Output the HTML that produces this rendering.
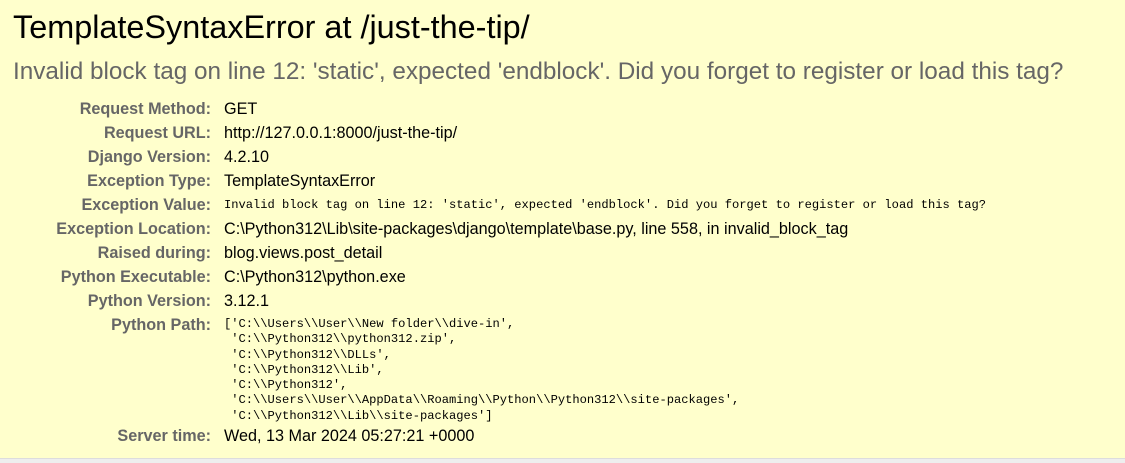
<!DOCTYPE html>
<html><head><meta charset="utf-8"><style>
html,body{margin:0;padding:0;}
body{width:1125px;height:463px;background:#eee;font-family:"Liberation Sans",Arial,sans-serif;overflow:hidden;position:relative;}
#s{position:absolute;left:0;top:0;width:1125px;height:458px;background:#ffc;border-bottom:1px solid #ddd;}
h1{position:absolute;left:13px;top:5px;margin:0;font-size:32.4px;font-weight:normal;color:#000;white-space:nowrap;line-height:44px;}
h2{position:absolute;left:13px;top:56px;margin:0;font-size:24.3px;font-weight:normal;color:#666;white-space:nowrap;line-height:32px;}
.r{position:absolute;left:0;display:flex;font-size:16.2px;line-height:24px;white-space:nowrap;}
.r b{width:211px;text-align:right;color:#666;display:block;}
.r span{margin-left:13px;color:#000;}
.m{font-family:"Liberation Mono",monospace;font-size:12.1px;}
pre{margin:0;font-family:"Liberation Mono",monospace;font-size:12.1px;line-height:15.3px;margin-left:13px;padding-top:4px;}
</style></head><body>
<div id="s">
<h1>TemplateSyntaxError at /just-the-tip/</h1>
<h2>Invalid block tag on line 12: 'static', expected 'endblock'. Did you forget to register or load this tag?</h2>
<div class="r" style="top:97px"><b>Request Method:</b><span>GET</span></div>
<div class="r" style="top:121px"><b>Request URL:</b><span>http://127.0.0.1:8000/just-the-tip/</span></div>
<div class="r" style="top:145px"><b>Django Version:</b><span>4.2.10</span></div>
<div class="r" style="top:169px"><b>Exception Type:</b><span>TemplateSyntaxError</span></div>
<div class="r" style="top:193px"><b>Exception Value:</b><span class="m">Invalid block tag on line 12: 'static', expected 'endblock'. Did you forget to register or load this tag?</span></div>
<div class="r" style="top:217px"><b>Exception Location:</b><span>C:\Python312\Lib\site-packages\django\template\base.py, line 558, in invalid_block_tag</span></div>
<div class="r" style="top:241px"><b>Raised during:</b><span>blog.views.post_detail</span></div>
<div class="r" style="top:265px"><b>Python Executable:</b><span>C:\Python312\python.exe</span></div>
<div class="r" style="top:289px"><b>Python Version:</b><span>3.12.1</span></div>
<div class="r" style="top:313px"><b>Python Path:</b><pre>['C:\\Users\\User\\New folder\\dive-in',
 'C:\\Python312\\python312.zip',
 'C:\\Python312\\DLLs',
 'C:\\Python312\\Lib',
 'C:\\Python312',
 'C:\\Users\\User\\AppData\\Roaming\\Python\\Python312\\site-packages',
 'C:\\Python312\\Lib\\site-packages']</pre></div>
<div class="r" style="top:424px"><b>Server time:</b><span>Wed, 13 Mar 2024 05:27:21 +0000</span></div>
</div>
</body></html>
